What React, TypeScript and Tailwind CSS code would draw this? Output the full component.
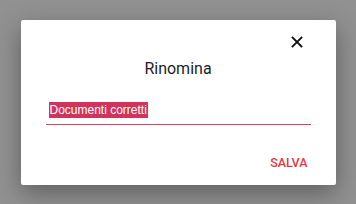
import React from 'react';

const App: React.FC = () => {
  return (
    <div className="w-[356px] h-[204px] bg-[#919191] flex items-center justify-center font-['Roboto',sans-serif]">
      {/* Dialog */}
      <div className="w-[315px] h-[165px] bg-white rounded-[2px] shadow-[0_8px_24px_rgba(0,0,0,0.35)] flex flex-col px-[25px]">
        <div className="flex justify-end pt-[11px] mr-[3px]">
          <button className="w-[22px] h-[22px] flex items-center justify-center text-[#111]">
            <svg width="12" height="12" viewBox="0 0 12 12" stroke="currentColor" strokeWidth="1.8" strokeLinecap="square">
              <path d="M1.5 1.5 L10.5 10.5 M10.5 1.5 L1.5 10.5" />
            </svg>
          </button>
        </div>
        <h2 className="text-center text-[16px] text-[#1e1e1e] mt-[6px] leading-[20px]">Rinomina</h2>
        <div className="flex mt-[23px] border-b border-[#e0405e] pb-[6px] pl-[3px]">
          <span className="bg-[#d3335a] text-white font-['Liberation_Sans',sans-serif] text-[12px] leading-[16px] px-[1px]">Documenti corretti</span>
        </div>
        <div className="flex justify-end mt-[30px] mr-[3px]">
          <button className="text-[#e53945] text-[12.5px] font-medium leading-[16px]">SALVA</button>
        </div>
      </div>
    </div>
  );
};

export default App;
